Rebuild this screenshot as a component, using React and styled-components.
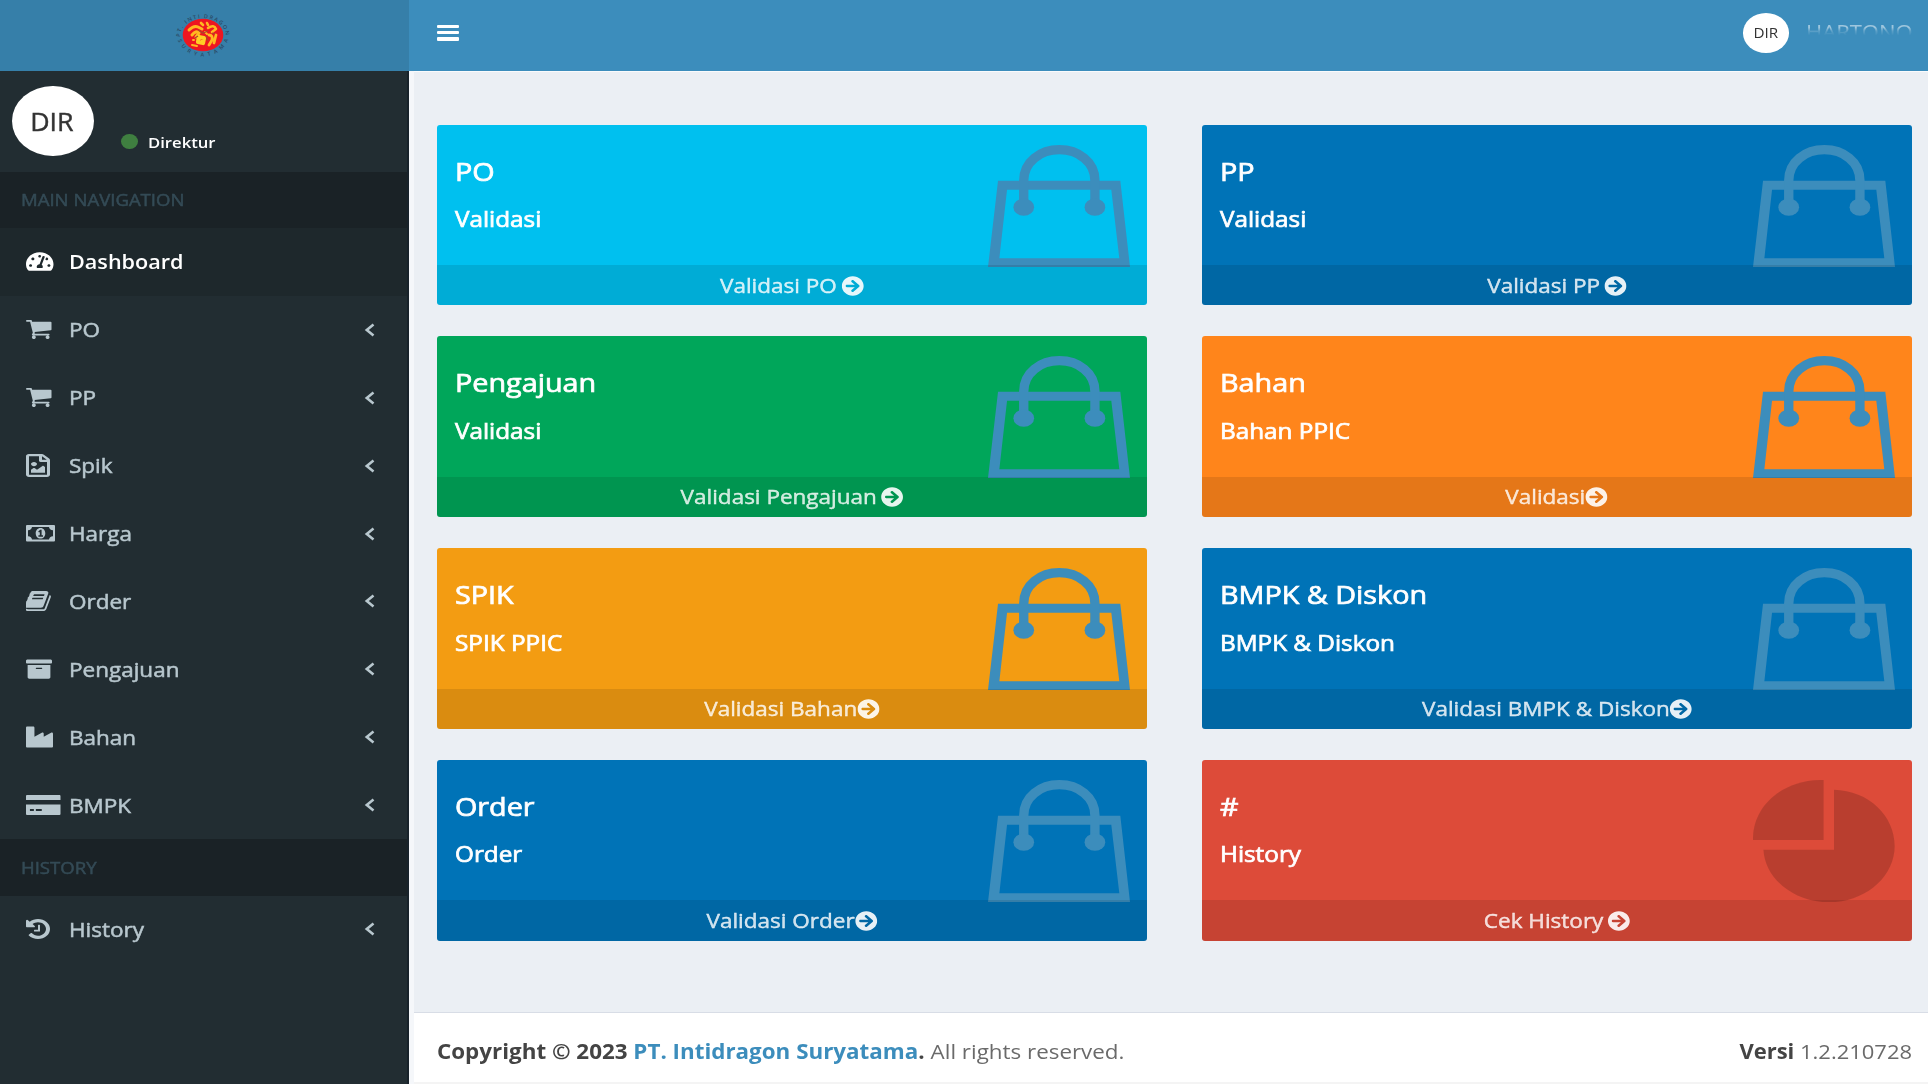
import React from 'react';
import styled, { createGlobalStyle } from 'styled-components';
import {
  FaTachometerAlt,
  FaRegFileImage,
  FaArchive,
  FaIndustry,
  FaArrowCircleRight,
} from 'react-icons/fa';

const GlobalStyle = createGlobalStyle`
  * { box-sizing: border-box; }
  body {
    margin: 0;
    overflow: hidden;
    font-family: 'Open Sans', 'Noto Sans', sans-serif;
    background: #222d32;
  }
`;

const Page = styled.div`
  display: grid;
  grid-template-columns: 409px 1fr;
  grid-template-rows: 70.5px 1fr;
  width: 1928px;
  height: 1084px;
`;

/* Widens a run of text without changing its height; $bold thickens the strokes a little. */
const Wide = styled.span`
  display: inline-block;
  white-space: nowrap;
  transform: scaleX(${(p) => p.$x || 1.125});
  transform-origin: ${(p) => p.$from || 'left'} center;
  -webkit-text-stroke: ${(p) => p.$bold || 0}px currentColor;
`;

/* ---------- top bar ---------- */

const Brand = styled.div`
  display: flex;
  justify-content: center;
  align-items: center;
  background: #367fa9;
  svg { display: block; margin-right: 4px; }
`;

const TopBar = styled.header`
  display: flex;
  justify-content: space-between;
  align-items: center;
  padding: 0 15px 5px 27.5px;
  background: #3c8dbc;
`;

const Burger = styled.div`
  display: flex;
  flex-direction: column;
  gap: 3px;
  width: 22.5px;
`;

const BurgerBar = styled.i`
  height: 3.3px;
  border-radius: 1px;
  background: #fff;
`;

const Account = styled.div`
  display: flex;
  align-items: center;
  gap: 17.5px;
`;

const Avatar = styled.div`
  display: flex;
  flex: none;
  align-items: center;
  justify-content: center;
  width: ${(p) => (p.$small ? 46 : 82)}px;
  height: ${(p) => (p.$small ? 39.5 : 70.5)}px;
  border-radius: 50%;
  background: #fff;
  color: #333;
  font-size: ${(p) => (p.$small ? 14.5 : 25)}px;
`;

const AccountName = styled.span`
  width: 107px;
  margin-top: -2px;
  font-size: 20px;
  line-height: 28px;
  color: rgba(255, 255, 255, 0.5);
  mask-image: linear-gradient(#000 34%, rgba(0, 0, 0, 0.35) 46%, transparent 62%);
`;

/* ---------- sidebar ---------- */

const Sidebar = styled.aside`
  display: flex;
  flex-direction: column;
  background: #222d32;
  border-right: 2px solid #18222a;
`;

const UserPanel = styled.div`
  display: flex;
  align-items: flex-start;
  height: 101px;
  padding: 15px 0 0 12px;
`;

const Status = styled.div`
  display: flex;
  align-items: center;
  gap: 9.5px;
  height: 22px;
  margin: 45px 0 0 27px;
  font-size: 15px;
  font-weight: 600;
  color: #fff;
`;

const Dot = styled.i`
  width: 17px;
  height: 15.5px;
  border-radius: 50%;
  background: #3f7f40;
`;

const SectionTitle = styled.h4`
  display: flex;
  align-items: center;
  height: 56.5px;
  margin: 0;
  padding-left: 21px;
  background: #1a2226;
  color: #344b56;
  font-size: 16.5px;
  font-weight: 400;
`;

const MenuItem = styled.a`
  display: grid;
  grid-template-columns: 42.5px 1fr 11px;
  align-items: center;
  height: 67.9px;
  padding: 0 32px 0 26px;
  background: ${(p) => (p.$active ? '#1e282c' : 'transparent')};
  color: ${(p) => (p.$active ? '#fff' : '#b8c7ce')};
  font-size: 20px;
  font-weight: ${(p) => (p.$active ? 600 : 400)};
  svg { display: block; }
`;

const MenuIcon = styled.span`
  svg {
    width: ${(p) => p.$w}px;
    height: ${(p) => p.$h}px;
  }
`;

/* ---------- content ---------- */

const Main = styled.main`
  display: flex;
  flex-direction: column;
  border-left: 5px solid #f5f7fa;
  background: #ebeff4;
`;

const Cards = styled.section`
  display: grid;
  grid-template-columns: 1fr 1fr;
  grid-auto-rows: 180.8px;
  gap: 31px 54.5px;
  height: 941.5px;
  padding: 53px 16px 0 22.7px;
  border-top: 1.5px solid #fafbfc;
`;

const Card = styled.article`
  display: flex;
  flex-direction: column;
  border-radius: 3px;
  overflow: hidden;
  background: ${(p) => p.$color};
  color: #fff;
`;

const CardBody = styled.div`
  display: flex;
  justify-content: space-between;
  height: 140.5px;
  padding: 20px 17.5px 0 18px;
  svg { display: block; flex: none; }
`;

const CardText = styled.div`
  display: flex;
  flex-direction: column;
  gap: 20.6px;
  padding-top: 11px;
`;

const CardTitle = styled.h3`
  margin: 0;
  font-size: 25px;
  line-height: 30px;
  font-weight: 400;
`;

const CardSubtitle = styled.p`
  margin: 0;
  font-size: 21.5px;
  line-height: 26px;
  font-weight: 400;
`;

const CardLink = styled.a`
  display: flex;
  flex: 1;
  align-items: center;
  justify-content: center;
  background: rgba(0, 0, 0, 0.1);
  color: rgba(255, 255, 255, 0.8);
  font-size: 20px;
  svg {
    display: inline-block;
    width: 20px;
    height: 20px;
    margin-left: ${(p) => (p.$gap ? 4 : 0)}px;
    vertical-align: -3px;
    color: rgba(255, 255, 255, 0.9);
  }
`;

const Footer = styled.footer`
  display: flex;
  flex: 1;
  justify-content: space-between;
  align-items: center;
  padding: 7px 16px 0 22.7px;
  border-top: 1.5px solid #d8dde6;
  border-bottom: 2px solid #f4f4f4;
  background: #fff;
  color: #6a6a6a;
  font-size: 20.5px;
  b { color: #444; font-weight: 700; }
`;

const FooterLink = styled.b`
  && { color: #3c8dbc; }
`;

/* ---------- drawings ---------- */

const Logo = () => (
  <svg width="58" height="50" viewBox="0 0 58 50">
    <defs>
      <path id="ringTop" d="M6 27 A23 19 0 0 1 52 27" />
      <path id="ringBottom" d="M3 24 A26 22.5 0 0 0 55 24" />
    </defs>
    <ellipse cx="29" cy="25" rx="20.3" ry="16.3" fill="#ee1620" />
    <g fill="none" stroke="#ffb820" strokeLinecap="round" strokeLinejoin="round">
      <path d="M15 20 q5 -5 9 -3 l4 2 M18 25 q4 -5 7 -2 l-3 4" strokeWidth="3" />
      <path d="M27 13 l2 2 M33 13 l1 2 M34 18 q6 -4 8 1 l-4 3" strokeWidth="2.6" />
      <path d="M25 27 l-1 5 l5 1 l1 -5z" strokeWidth="4.2" stroke="#ffcf25" />
      <path d="M35 25 q4 0 3 5 l-3 5 M42 25 l-2 8" strokeWidth="2.8" />
      <path d="M18 35 l5 1 M19 30 l1 0 M31 22 l2 2" strokeWidth="2" />
    </g>
    <path d="M24 20 l5 3 l5 -2 M32 26 l2 5 M21 28 l3 -2 M38 23 l3 1" stroke="#a8482a" strokeWidth="1.3" fill="none" />
    <g fill="#2b4a66" fontSize="5.4" fontWeight="600">
      <text><textPath href="#ringTop" textLength="64">PT. INTI DRAGON</textPath></text>
      <text><textPath href="#ringBottom" startOffset="6" textLength="64">SURYATAMA</textPath></text>
    </g>
  </svg>
);

const Bag = () => (
  <svg width="142" height="122" viewBox="53 44 425 365" preserveAspectRatio="none">
    <path fill="#3c8dbc" fillRule="evenodd" d="M83 151H449L478 409H53Z M110 178L87 383H446L422 178Z" />
    <path fill="none" stroke="#3c8dbc" strokeWidth="28" d="M160 222V150C160 94 210 58 266.5 58C323 58 373 94 373 150V222" />
    <ellipse cx="160" cy="230" rx="31" ry="26" fill="#3c8dbc" />
    <ellipse cx="373" cy="230" rx="31" ry="26" fill="#3c8dbc" />
  </svg>
);

const Pie = () => (
  <svg width="142" height="122.5" viewBox="0 0 142 122.5" fill="rgba(0,0,0,.16)">
    <path d="M70.6 0V60H0C-1 27 29 -1 70.6 0Z" />
    <path d="M81 9.7C116 10.5 141.7 36 141.7 66C141.7 97 112 122.3 76 122.3C41 122.3 12 99 10.4 69.7H81Z" />
  </svg>
);

const Chevron = () => (
  <svg width="11" height="14" viewBox="0 0 11 14">
    <path d="M9.5 1.6L2.8 7L9.5 12.4" fill="none" stroke="currentColor" strokeWidth="2.6" />
  </svg>
);

const CartIcon = (props) => (
  <svg {...props} viewBox="64 256 1664 1408" fill="currentColor">
    <path d="M704 1536q0 52-38 90t-90 38-90-38-38-90 38-90 90-38 90 38 38 90zm896 0q0 52-38 90t-90 38-90-38-38-90 38-90 90-38 90 38 38 90zm128-1088v512q0 24-16.5 42.5t-40.5 21.5l-1044 122q13 60 13 70 0 16-24 64h920q26 0 45 19t19 45-19 45-45 19h-1024q-26 0-45-19t-19-45q0-11 8-31.5t16-36 21.5-40 15.5-29.5l-177-823h-204q-26 0-45-19t-19-45 19-45 45-19h256q16 0 28.5 6.5t19.5 15.5 13 24.5 8 26 5.5 29.5 4.5 26h1201q26 0 45 19t19 45z" />
  </svg>
);

const MoneyIcon = (props) => (
  <svg {...props} viewBox="0 0 29 17" fill="currentColor">
    <path fillRule="evenodd" d="M1 0H28Q29 0 29 1V16Q29 17 28 17H1Q0 17 0 16V1Q0 0 1 0Z M6 2Q5.6 5 2 5.3V11.7Q5.6 12 6 15H23Q23.4 12 27 11.7V5.3Q23.4 5 23 2Z" />
    <path fillRule="evenodd" d="M14.5 3C17.5 3 19.3 5.6 19.3 8.5S17.5 14 14.5 14S9.7 11.4 9.7 8.5S11.5 3 14.5 3Z M14.2 5L12.2 6.6L13 7.6L13.8 7.1V10.6H12.4V12H17V10.6H15.6V5Z" />
  </svg>
);

const BookIcon = (props) => (
  <svg {...props} viewBox="120 128 1550 1536" fill="currentColor">
    <path d="M1639 478q40 57 18 129l-275 906q-19 64-76.5 107.5t-122.5 43.5h-923q-77 0-148.5-53.5t-99.5-131.5q-24-67-2-127 0-4 3-27t4-37q1-8-3-21.5t-3-19.5q2-11 8-21t16.5-23.5 16.5-23.5q23-38 45-91.5t30-91.5q3-10 .5-30t-.5-28q3-11 17-28t17-23q21-36 42-92t25-90q1-9-2.5-32t.5-28q4-13 22-30.5t22-22.5q19-26 42.5-84.5t27.5-96.5q1-8-3-25.5t-2-26.5q2-8 9-18t18-23 17-21q8-12 16.5-30.5t15-35 16-36 19.5-32 26.5-23.5 36-11.5 47.5 5.5l-1 3q38-9 51-9h761q74 0 114 56t18 130l-274 906q-36 119-71.5 153.5t-128.5 34.5h-869q-27 0-38 15-11 16-1 43 24 70 144 70h923q29 0 56-15.5t35-41.5l300-987q7-22 5-57 38 15 59 43zm-1064 2q-4 13 2 22.5t20 9.5h608q13 0 25.5-9.5t16.5-22.5l21-64q4-13-2-22.5t-20-9.5h-608q-13 0-25.5 9.5t-16.5 22.5zm-83 256q-4 13 2 22.5t20 9.5h608q13 0 25.5-9.5t16.5-22.5l21-64q4-13-2-22.5t-20-9.5h-608q-13 0-25.5 9.5t-16.5 22.5z" />
  </svg>
);

const HistoryIcon = (props) => (
  <svg {...props} viewBox="128 128 1536 1536" fill="currentColor">
    <path d="M1664 896q0 156-61 298t-164 245-245 164-298 61q-172 0-327-72.5t-264-204.5q-7-10-6.5-22.5t8.5-20.5l137-138q10-9 25-9 16 2 23 12 73 95 179 147t225 52q104 0 198.5-40.5t163.5-109.5 109.5-163.5 40.5-198.5-40.5-198.5-109.5-163.5-163.5-109.5-198.5-40.5q-98 0-188 35.5t-160 101.5l137 138q31 30 14 69-17 40-59 40h-448q-26 0-45-19t-19-45v-448q0-42 40-59 39-17 69 14l130 129q107-101 244.5-156.5t284.5-55.5q156 0 298 61t245 164 164 245 61 298zm-640-288v448q0 14-9 23t-23 9h-320q-14 0-23-9t-9-23v-64q0-14 9-23t23-9h224v-352q0-14 9-23t23-9h64q14 0 23 9t9 23z" />
  </svg>
);

const CreditIcon = (props) => (
  <svg {...props} viewBox="0 0 35 20" fill="currentColor">
    <path fillRule="evenodd" d="M1 0H34Q35 0 35 1V5H0V1Q0 0 1 0Z M0 9.5H35V19Q35 20 34 20H1Q0 20 0 19Z M4 14V16H8V14Z M10 14V16H16V14Z" />
  </svg>
);

/* ---------- data ---------- */

const MENU = [
  { label: 'Dashboard', icon: FaTachometerAlt, w: 27.5, h: 21, active: true },
  { label: 'PO', icon: CartIcon, w: 25.5, h: 19 },
  { label: 'PP', icon: CartIcon, w: 25.5, h: 19 },
  { label: 'Spik', icon: FaRegFileImage, w: 24, h: 23 },
  { label: 'Harga', icon: MoneyIcon, w: 29, h: 16.5 },
  { label: 'Order', icon: BookIcon, w: 25, h: 20 },
  { label: 'Pengajuan', icon: FaArchive, w: 26, h: 22 },
  { label: 'Bahan', icon: FaIndustry, w: 27, h: 24 },
  { label: 'BMPK', icon: CreditIcon, w: 34.5, h: 20 },
];

const HISTORY = [{ label: 'History', icon: HistoryIcon, w: 24, h: 20 }];

const CARDS = [
  { title: 'PO', sub: 'Validasi', link: 'Validasi PO', gap: true, color: '#00c0ef' },
  { title: 'PP', sub: 'Validasi', link: 'Validasi PP', gap: true, color: '#0073b7' },
  { title: 'Pengajuan', sub: 'Validasi', link: 'Validasi Pengajuan', gap: true, color: '#00a65a' },
  { title: 'Bahan', sub: 'Bahan PPIC', link: 'Validasi', color: '#ff851b' },
  { title: 'SPIK', sub: 'SPIK PPIC', link: 'Validasi Bahan', color: '#f39c12' },
  { title: 'BMPK & Diskon', sub: 'BMPK & Diskon', link: 'Validasi BMPK & Diskon', color: '#0073b7' },
  { title: 'Order', sub: 'Order', link: 'Validasi Order', color: '#0073b7' },
  { title: '#', sub: 'History', link: 'Cek History', gap: true, color: '#dd4b39', pie: true },
];

const MenuRow = ({ item }) => {
  const Icon = item.icon;
  return (
    <MenuItem $active={item.active}>
      <MenuIcon $w={item.w} $h={item.h}><Icon preserveAspectRatio="none" /></MenuIcon>
      <span><Wide $x={item.active ? 1.08 : 1.125} $bold={item.active ? 0 : 0.5}>{item.label}</Wide></span>
      {!item.active && <Chevron />}
    </MenuItem>
  );
};

export default function App() {
  return (
    <Page>
      <GlobalStyle />
      <Brand><Logo /></Brand>
      <TopBar>
        <Burger><BurgerBar /><BurgerBar /><BurgerBar /></Burger>
        <Account>
          <Avatar $small><Wide $x={1.05} $from="center">DIR</Wide></Avatar>
          <AccountName><Wide $x={1.1}>HARTONO</Wide></AccountName>
        </Account>
      </TopBar>
      <Sidebar>
        <UserPanel>
          <Avatar><Wide $x={1.07} $from="right" $bold={0.4}>DIR</Wide></Avatar>
          <Status><Dot /><Wide $x={1.11}>Direktur</Wide></Status>
        </UserPanel>
        <SectionTitle><Wide $bold={0.5}>MAIN NAVIGATION</Wide></SectionTitle>
        {MENU.map((m) => <MenuRow key={m.label} item={m} />)}
        <SectionTitle><Wide $bold={0.5}>HISTORY</Wide></SectionTitle>
        {HISTORY.map((m) => <MenuRow key={m.label} item={m} />)}
      </Sidebar>
      <Main>
        <Cards>
          {CARDS.map((c) => (
            <Card key={c.title} $color={c.color}>
              <CardBody>
                <CardText>
                  <CardTitle><Wide $x={1.15} $bold={0.7}>{c.title}</Wide></CardTitle>
                  <CardSubtitle><Wide $x={1.13} $bold={0.7}>{c.sub}</Wide></CardSubtitle>
                </CardText>
                {c.pie ? <Pie /> : <Bag />}
              </CardBody>
              <CardLink $gap={c.gap}>
                <Wide $x={1.125} $from="center" $bold={0.4}>{c.link}<FaArrowCircleRight /></Wide>
              </CardLink>
            </Card>
          ))}
        </Cards>
        <Footer>
          <Wide $x={1.092}>
            <b>Copyright © 2023 <FooterLink>PT. Intidragon Suryatama</FooterLink>.</b> All rights reserved.
          </Wide>
          <Wide $x={1.072} $from="right"><b>Versi</b> 1.2.210728</Wide>
        </Footer>
      </Main>
    </Page>
  );
}
